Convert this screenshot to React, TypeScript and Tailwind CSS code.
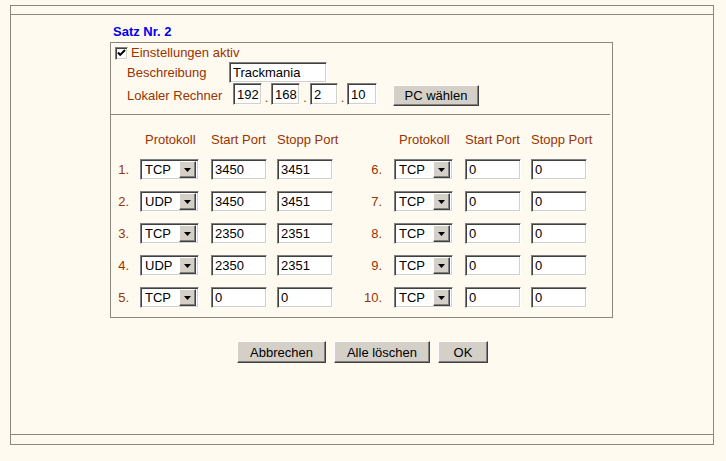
import type { ReactNode } from "react";

const FONT = "font-['Liberation_Sans',Arial,sans-serif]";

const inset =
  "box-border border border-t-[#808080] border-l-[#808080] border-r-white border-b-white bg-white shadow-[inset_1px_1px_0_#404040,inset_-1px_-1px_0_#d4d0c8]";

const outset =
  "box-border border border-t-white border-l-white border-r-[#404040] border-b-[#404040] bg-[#d4d0c8] shadow-[inset_-1px_-1px_0_#808080]";

type Rule = { proto: string; start: string; stop: string };

const left: Rule[] = [
  { proto: "TCP", start: "3450", stop: "3451" },
  { proto: "UDP", start: "3450", stop: "3451" },
  { proto: "TCP", start: "2350", stop: "2351" },
  { proto: "UDP", start: "2350", stop: "2351" },
  { proto: "TCP", start: "0", stop: "0" },
];

const right: Rule[] = [
  { proto: "TCP", start: "0", stop: "0" },
  { proto: "TCP", start: "0", stop: "0" },
  { proto: "TCP", start: "0", stop: "0" },
  { proto: "TCP", start: "0", stop: "0" },
  { proto: "TCP", start: "0", stop: "0" },
];

function Field({ value, width }: { value: string; width: string }) {
  return (
    <div className={`${inset} ${width} flex items-center pl-[3px] text-[13px] leading-none text-black`}>
      {value}
    </div>
  );
}

function Select({ value }: { value: string }) {
  return (
    <div className={`${inset} flex h-[21px] w-[59px] items-center justify-between p-[2px]`}>
      <span className="pl-[2px] text-[13px] leading-none text-black">{value}</span>
      <span className={`${outset} flex h-[17px] w-[17px] items-center justify-center`}>
        <svg width="7" height="4" viewBox="0 0 7 4">
          <path d="M0 0h7L3.5 4z" fill="#000" />
        </svg>
      </span>
    </div>
  );
}

function Button({ children, size, className = "" }: { children: ReactNode; size: string; className?: string }) {
  return (
    <button
      type="button"
      className={`${outset} ${size} ${className} flex shrink-0 items-center justify-center text-[13px] leading-none text-black`}
    >
      {children}
    </button>
  );
}

function Group({ rules, offset }: { rules: Rule[]; offset: number }) {
  return (
    <div className="flex flex-col gap-[11px]">
      {rules.map((r, i) => (
        <div key={i} className="flex h-[21px] items-center">
          <span className="w-[18px] text-right text-[13px] text-[#993300]">{i + 1 + offset}.</span>
          <div className={offset === 0 ? "ml-[11px]" : "ml-[12px]"}>
            <Select value={r.proto} />
          </div>
          <div className="ml-[12px]">
            <Field value={r.start} width="w-[56px] h-[21px]" />
          </div>
          <div className="ml-[10px]">
            <Field value={r.stop} width="w-[56px] h-[21px]" />
          </div>
        </div>
      ))}
    </div>
  );
}

function Header({ offset }: { offset: number }) {
  return (
    <div className="flex h-[16px] items-center whitespace-nowrap text-[13px] text-[#993300]">
      <span className="w-[18px]" />
      <span className={`${offset === 0 ? "ml-[11px]" : "ml-[12px]"} w-[59px] pl-[5px]`}>Protokoll</span>
      <span className="ml-[12px] w-[56px]">Start Port</span>
      <span className="ml-[10px] w-[56px]">Stopp Port</span>
    </div>
  );
}

export default function App() {
  return (
    <div className={`${FONT} min-h-[461px] w-full bg-[#fffaf0] px-[10px] pt-[5px]`}>
      <div className="box-border flex h-[440px] w-[704px] flex-col border border-[#888880]">
        <div className="box-border h-[9px] border-b border-[#888880]" />

        <div className="flex flex-1 flex-col pl-[99px] pt-[9px]">
          <h2 className="h-[16px] pl-[3px] text-[13px] font-bold leading-[16px] text-[#0000f0]">Satz Nr. 2</h2>

          <div className="mt-[2px] box-border h-[276px] w-[503px] border border-[#888880]">
            <div className="mt-[3px] flex h-[14px] items-center pl-[4px]">
              <span className={`${inset} flex h-[13px] w-[13px] items-center justify-center`}>
                <svg width="9" height="8" viewBox="0 0 9 8">
                  <path d="M1 3.5l2.2 2.4L8 1" stroke="#000" strokeWidth="2" fill="none" />
                </svg>
              </span>
              <span className="ml-[3px] text-[13px] text-[#993300]">Einstellungen aktiv</span>
            </div>

            <div className="mt-[2px] flex h-[21px] items-center pl-[16px]">
              <span className="w-[102px] text-[13px] text-[#993300]">Beschreibung</span>
              <Field value="Trackmania" width="w-[98px] h-[21px]" />
            </div>

            <div className="flex h-[22px] items-start pl-[16px]">
              <span className="mt-[3px] w-[106px] text-[13px] text-[#993300]">Lokaler Rechner</span>
              <Field value="192" width="w-[29px] h-[22px]" />
              <span className="flex w-[9px] justify-center self-end text-[13px] leading-[14px] text-[#993300]">.</span>
              <Field value="168" width="w-[29px] h-[22px]" />
              <span className="flex w-[10px] justify-center self-end text-[13px] leading-[14px] text-[#993300]">.</span>
              <Field value="2" width="w-[28px] h-[22px]" />
              <span className="flex w-[9px] justify-center self-end text-[13px] leading-[14px] text-[#993300]">.</span>
              <Field value="10" width="w-[30px] h-[22px]" />
              <Button size="w-[86px] h-[21px]" className="ml-[16px] mt-[2px]">PC wählen</Button>
            </div>

            <div className="mr-[2px] mt-[9px] border-t border-[#888880]" />

            <div className="mt-[17px] flex">
              <Header offset={0} />
              <div className="ml-[31px]">
                <Header offset={5} />
              </div>
            </div>

            <div className="mt-[11px] flex">
              <Group rules={left} offset={0} />
              <div className="ml-[31px]">
                <Group rules={right} offset={5} />
              </div>
            </div>
          </div>

          <div className="ml-[127px] mt-[23px] flex gap-[8px]">
            <Button size="w-[89px] h-[22px]">Abbrechen</Button>
            <Button size="w-[96px] h-[22px]">Alle löschen</Button>
            <Button size="w-[50px] h-[22px]">OK</Button>
          </div>
        </div>

        <div className="box-border h-[10px] border-t border-[#888880]" />
      </div>
    </div>
  );
}
